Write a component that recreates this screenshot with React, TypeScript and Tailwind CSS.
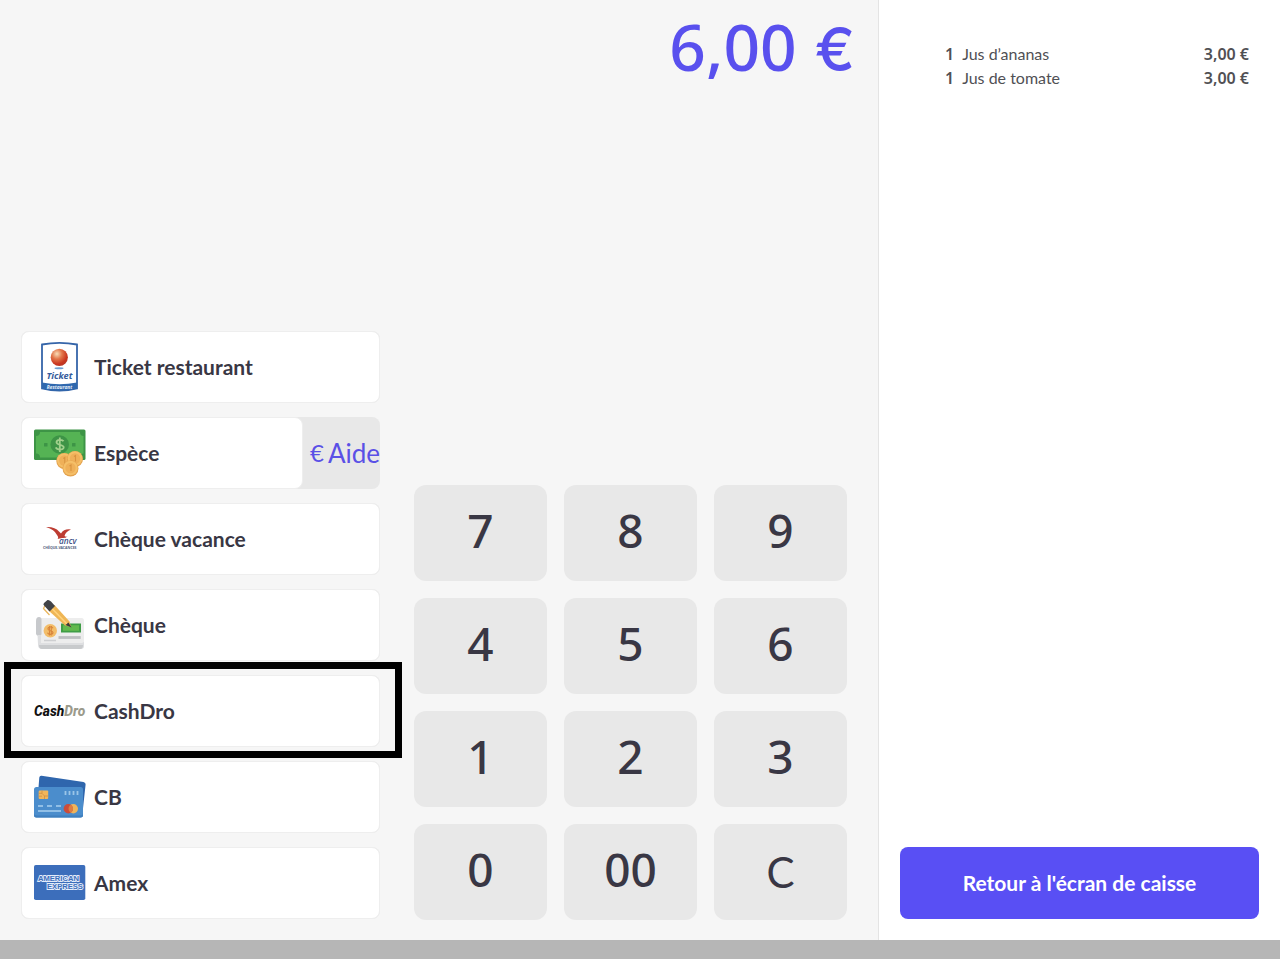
import type { ReactNode } from "react";

function TicketIcon() {
  return (
    <svg viewBox="0 0 52 52" className="size-[52px] shrink-0" aria-hidden="true">
      <defs>
        <radialGradient id="ball" cx="0.36" cy="0.3" r="0.75">
          <stop offset="0" stopColor="#f8ddb8" />
          <stop offset="0.4" stopColor="#e2764a" />
          <stop offset="0.8" stopColor="#c8351f" />
          <stop offset="1" stopColor="#b93a28" />
        </radialGradient>
      </defs>
      <path d="M8 3.5Q25.500 .3 43 3.500V47.500Q25.500 51.800 8 47.500Z" fill="#fff" stroke="#3565a9" strokeWidth="1.8" />
      <path d="M8 41.500Q25.500 44.800 43 41.500V47.700Q25.500 51.800 8 47.700Z" fill="#2f68ae" />
      <circle cx="25.300" cy="16.300" r="8.600" fill="url(#ball)" />
      <ellipse cx="25" cy="27.300" rx="4.500" ry="1" fill="#6f9fd0" />
      <text x="25.500" y="37.500" textAnchor="middle" fontFamily="Noto Sans, sans-serif" fontStyle="italic" fontWeight="700" fontSize="9.200" fill="#355c9c">Ticket</text>
      <text x="25.500" y="47.800" textAnchor="middle" fontFamily="Noto Sans, sans-serif" fontStyle="italic" fontWeight="700" fontSize="4.800" fill="#e6f0fa">Restaurant</text>
    </svg>
  );
}

function Coin({ x, y }: { x: number; y: number }) {
  return (
    <g>
      <circle cx={x} cy={y} r="8" fill="#e3a14c" />
      <circle cx={x} cy={y - 0.5} r="7.300" fill="#f5bf68" />
      <circle cx={x} cy={y - 0.5} r="5.200" fill="#efb059" />
      <path d={`M${x - 1} ${y - 2.5}l1.500-1v6`} fill="none" stroke="#d8923f" strokeWidth="1.100" />
    </g>
  );
}

function CashIcon() {
  return (
    <svg viewBox="0 0 52 52" className="size-[52px] shrink-0" aria-hidden="true">
      <rect x="0" y="2.500" width="51.500" height="30.500" rx="1.500" fill="#3d9446" />
      <path d="M6 5H46Q46 9 49.500 9V26.500Q46 26.500 46 30.500H6Q6 26.500 2 26.500V9Q6 9 6 5Z" fill="#55b354" />
      <circle cx="25.700" cy="17.500" r="9.300" fill="#3d9446" />
      <rect x="10" y="16" width="3.500" height="3.500" rx=".5" fill="#3d9446" />
      <rect x="38" y="16" width="3.500" height="3.500" rx=".5" fill="#3d9446" />
      <path d="M29.500 14.200C28.500 12.400 22.500 12 22.500 15.200S29.700 17.300 29.700 20.300S23 23 21.800 20.300M25.800 10.500V25" fill="none" stroke="#a1d08c" strokeWidth="1.800" />
      <Coin x={30.3} y={34} />
      <Coin x={41} y={32} />
      <Coin x={36.5} y={41.5} />
    </svg>
  );
}

function AncvIcon() {
  return (
    <svg viewBox="0 0 52 52" className="size-[52px] shrink-0" aria-hidden="true">
      <path d="M12 14Q21 13.500 25 18.500L27 20.500Q30 15.500 37 16.500Q31.500 18.500 30.500 23Q31.500 24 33.500 23.500Q31 25.500 28 25L23.500 26Q25 24.500 23 22Q20.500 16.500 12 14Z" fill="#bd3c32" />
      <text x="25" y="30.700" fontFamily="Noto Sans, sans-serif" fontStyle="italic" fontWeight="500" fontSize="8.300" fill="#344a82">ancv</text>
      <text x="9" y="36.300" fontFamily="Noto Sans, sans-serif" fontWeight="700" fontSize="3.500" fill="#515d7d">CHÈQUE-VACANCES</text>
    </svg>
  );
}

function ChequeIcon() {
  return (
    <svg viewBox="0 0 52 52" className="size-[52px] shrink-0" aria-hidden="true">
      <path d="M5 19H47.500Q50 19 50 22V45H5Z" fill="#ededed" />
      <path d="M2 22Q2 18 5 18T7.500 22V35Q7.500 37 5 37T2 35Z" fill="#c7c9cc" />
      <path d="M3.500 36H7V44H48L50 43V47Q50 50 47 50H8Q4 50 4 45.500Z" fill="#dedfe1" />
      <path d="M5 46H49Q49 50 46 50H8Q5 50 5 46Z" fill="#c8cacc" />
      <circle cx="16.300" cy="31.700" r="6.700" fill="#f3bd69" />
      <path d="M19 29.200C17.800 27.300 13.700 27.900 13.900 30S19 31.300 19 33.600S14.500 36 13.500 33.800M15.500 27V36.500M17.300 27V36.500" fill="none" stroke="#d8853b" strokeWidth="1.100" />
      <rect x="27" y="24.500" width="20" height="9" fill="#3f9d46" />
      <rect x="29" y="26.200" width="16" height="5.600" fill="#62b94e" />
      <path d="M24.500 38.500H46.700" stroke="#bdbfc1" strokeWidth="2.800" />
      <path d="M10 41.500H22" stroke="#cecfd1" strokeWidth="1.500" />
      <path d="M11 6.500L9.500 9.500L15.500 16" fill="none" stroke="#eab65c" strokeWidth="1.300" strokeLinejoin="round" />
      <path d="M14.500 11.500L20.500 6L35.500 22.500L37 28L31 26.500Z" fill="#efb655" />
      <path d="M17.500 9L33 25" stroke="#ffd27c" strokeWidth="1.600" />
      <path d="M31.500 26L34.500 23.500L37.500 28.500Z" fill="#3c3c3e" />
      <path d="M10 4L13.500 1Q15 .5 17 2.500L21 7L15.500 12.500L10.500 7Q8.500 5.300 10 4Z" fill="#414347" />
    </svg>
  );
}

function CashDroIcon() {
  return (
    <svg viewBox="0 0 52 52" className="size-[52px] shrink-0" aria-hidden="true">
      <text x="0" y="31" fontFamily="Roboto, sans-serif" fontStyle="italic" fontWeight="800" fontSize="13.800" fill="#111">
        Cash<tspan fill="#9b9a8b">Dro</tspan>
      </text>
    </svg>
  );
}

function CardsIcon() {
  return (
    <svg viewBox="0 0 52 52" className="size-[52px] shrink-0" aria-hidden="true">
      <path d="M7.500 4.800L49.500 11Q51.800 11.500 51.600 13.500L48.500 42L3 35L5.300 6.500Q5.700 4.500 7.500 4.800Z" fill="#2f66ad" />
      <rect x="0" y="16" width="49" height="30.500" rx="2.500" fill="#4b8dcc" />
      <path d="M2 46.500H46.500Q49 46.500 49 44V42Q49 44.500 46 44.500H3Q0 44.500 0 42V44Q0 46.500 2 46.500Z" fill="#3f7fbe" />
      <rect x="4.700" y="19.500" width="9.500" height="8.500" rx="1" fill="#f1b65b" />
      <path d="M4.700 22.300H8L10.500 25H14.200M8 19.500V22.300M10.500 25V28M4.700 25.200H8" fill="none" stroke="#cf8f43" strokeWidth=".8" />
      <path d="M31.500 20V24M35.500 20V24M39.500 20V24M43.500 20V24" stroke="#9bc5e8" strokeWidth="1.800" />
      <path d="M4 35H9M13 35H18M22 35H27M4 40H27" stroke="#a9cfee" strokeWidth="1.700" />
      <circle cx="39.300" cy="37.700" r="4.700" fill="#f0b45a" />
      <circle cx="34.300" cy="37.700" r="4.700" fill="#cb4c3a" />
      <path d="M36.800 33.700A4.700 4.700 0 0 1 36.800 41.700A4.700 4.700 0 0 1 36.800 33.700Z" fill="#de7d43" />
    </svg>
  );
}

function AmexIcon() {
  return (
    <svg viewBox="0 0 52 52" className="size-[52px] shrink-0" aria-hidden="true">
      <rect x="0" y="8" width="51.300" height="35" rx="1.800" fill="#3c6ebb" />
      <g fontFamily="Liberation Sans, sans-serif" fontWeight="700" fontSize="7.600" fill="#3c6ebb" stroke="#e3ecfa" strokeWidth="1.800" paintOrder="stroke">
        <text x="4" y="24">AMERICAN</text>
        <text x="13" y="32.300">EXPRESS</text>
      </g>
    </svg>
  );
}

type Method = { label: string; icon: ReactNode; help?: boolean; framed?: boolean };

const methods: Method[] = [
  { label: "Ticket restaurant", icon: <TicketIcon /> },
  { label: "Espèce", icon: <CashIcon />, help: true },
  { label: "Chèque vacance", icon: <AncvIcon /> },
  { label: "Chèque", icon: <ChequeIcon /> },
  { label: "CashDro", icon: <CashDroIcon />, framed: true },
  { label: "CB", icon: <CardsIcon /> },
  { label: "Amex", icon: <AmexIcon /> },
];

const keys = ["7", "8", "9", "4", "5", "6", "1", "2", "3", "0", "00", "C"];

const items = [
  { qty: 1, name: "Jus d’ananas", price: "3,00 €" },
  { qty: 1, name: "Jus de tomate", price: "3,00 €" },
];

function MethodRow({ label, icon, help, framed }: Method) {
  return (
    <li className="relative flex h-[72px] rounded-lg bg-[#e8e8e8]">
      <button
        type="button"
        className="flex min-w-0 flex-1 items-center gap-2 rounded-lg border border-[#eeeeee] bg-white pl-3 text-left text-[21px] font-bold text-[#393744]"
      >
        {icon}
        <span>{label}</span>
      </button>
      {help && (
        <button type="button" className="flex w-[77px] items-center justify-end gap-1 text-[26px] text-[#5a50e6]">
          <span className="text-2xl">€</span>
          <span>Aide</span>
        </button>
      )}
      {framed && (
        <span className="pointer-events-none absolute -top-[13px] -right-[22px] -bottom-[11px] -left-[17px] z-10 border-[7px] border-black" />
      )}
    </li>
  );
}

export default function App() {
  return (
    <div className="flex min-h-screen flex-col bg-[#f6f6f6] font-['Lato',sans-serif]">
      <div className="grid flex-1 grid-cols-[878fr_402fr]">
        <main className="flex flex-col justify-between pb-5 pl-[21px]">
          <output className="flex items-baseline justify-end pt-0.5 pr-[23px] font-['Noto_Sans',sans-serif] text-[64px] leading-[90px] font-medium text-[#5950ee]">
            <span>6,00</span>
            <span className="pl-[18px] font-['Inter',sans-serif] text-[60px]">€</span>
          </output>
          <div className="grid grid-cols-[359fr_433fr] items-end gap-[34px] pr-[31px]">
            <ul className="flex flex-col gap-3.5 pb-px">
              {methods.map((m) => (
                <MethodRow key={m.label} {...m} />
              ))}
            </ul>
            <div className="grid grid-cols-3 gap-[17px]">
              {keys.map((k) =>
                k === "C" ? (
                  <button key={k} type="button" className="h-24 rounded-xl bg-[#e8e8e8] text-[42px] text-[#393744]">
                    {k}
                  </button>
                ) : (
                  <button
                    key={k}
                    type="button"
                    className="h-24 rounded-xl bg-[#e8e8e8] pb-1.5 font-['Noto_Sans',sans-serif] text-[46px] font-medium text-[#393744]"
                  >
                    {k}
                  </button>
                ),
              )}
            </div>
          </div>
        </main>
        <aside className="flex flex-col justify-between border-l border-[#e4e4e4] bg-white px-[21px] pt-[42px] pb-[21px]">
          <ul className="pr-2.5 pl-[45px] text-base leading-6 text-[#505054]">
            {items.map((it) => (
              <li key={it.name} className="flex gap-2">
                <span className="font-['Noto_Sans',sans-serif] font-semibold">{it.qty}</span>
                <span className="flex-1">{it.name}</span>
                <span className="font-['Noto_Sans',sans-serif] font-semibold">{it.price}</span>
              </li>
            ))}
          </ul>
          <button type="button" className="h-[72px] rounded-lg bg-[#594ff4] text-[21px] font-bold text-white">
            Retour à l'écran de caisse
          </button>
        </aside>
      </div>
      <footer className="h-[19px] bg-[#b6b6b6]" />
    </div>
  );
}
